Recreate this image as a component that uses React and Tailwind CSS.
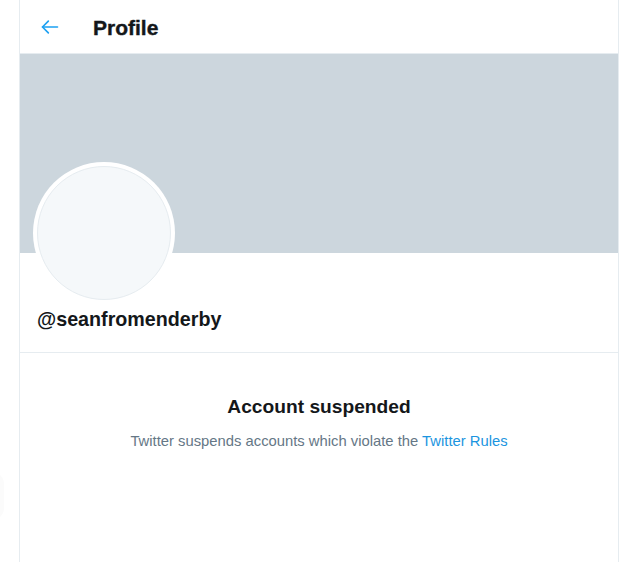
import React from "react";

export default function App() {
  return (
    <div className="relative w-[633px] h-[562px] bg-white overflow-hidden" style={{ fontFamily: '"Liberation Sans", Arial, sans-serif' }}>
      <div className="ml-[19px] w-[600px] h-[562px] border-x border-[#e6ecf0] flex flex-col">
        <div className="h-[54px] border-b border-[#e6ecf0] flex items-center pl-[20px] pt-[2px]">
          <svg width="20" height="20" viewBox="0 0 24 24" className="text-[#1da1f2] -mt-[2px]" fill="none" stroke="currentColor" strokeWidth="2" strokeLinecap="round" strokeLinejoin="round">
            <path d="M21 12H3" />
            <path d="M10 5l-7 7 7 7" />
          </svg>
          <div className="ml-[33px] text-[21px] font-black text-[#14171a] leading-none" style={{ WebkitTextStroke: "0.4px #14171a" }}>Profile</div>
        </div>
        <div className="h-[199px] bg-[#ccd6dd] shrink-0" />
        <div className="-mt-[91px] ml-[13px] w-[142px] h-[142px] rounded-full bg-white p-[4px] shrink-0">
          <div className="w-full h-full rounded-full bg-[#f5f8fa] border border-[#e6ecf0]" />
        </div>
        <div className="h-[49px] border-b border-[#e6ecf0] pl-[17px] pt-[2px]">
          <div className="text-[19.7px] font-bold text-[#14171a] leading-[26px]">@seanfromenderby</div>
        </div>
        <div className="flex flex-col items-center pt-[41px]">
          <div className="text-[19.2px] font-bold text-[#14171a] leading-[26px]">Account suspended</div>
          <div className="mt-[11px] text-[14.8px] text-[#657786] leading-[20px]">
            Twitter suspends accounts which violate the <span className="text-[#1b95e0]">Twitter Rules</span>
          </div>
        </div>
      </div>
      <div className="absolute left-[-20px] top-[472px] w-[24px] h-[48px] rounded-full bg-[#fbfbfb]" />
    </div>
  );
}
